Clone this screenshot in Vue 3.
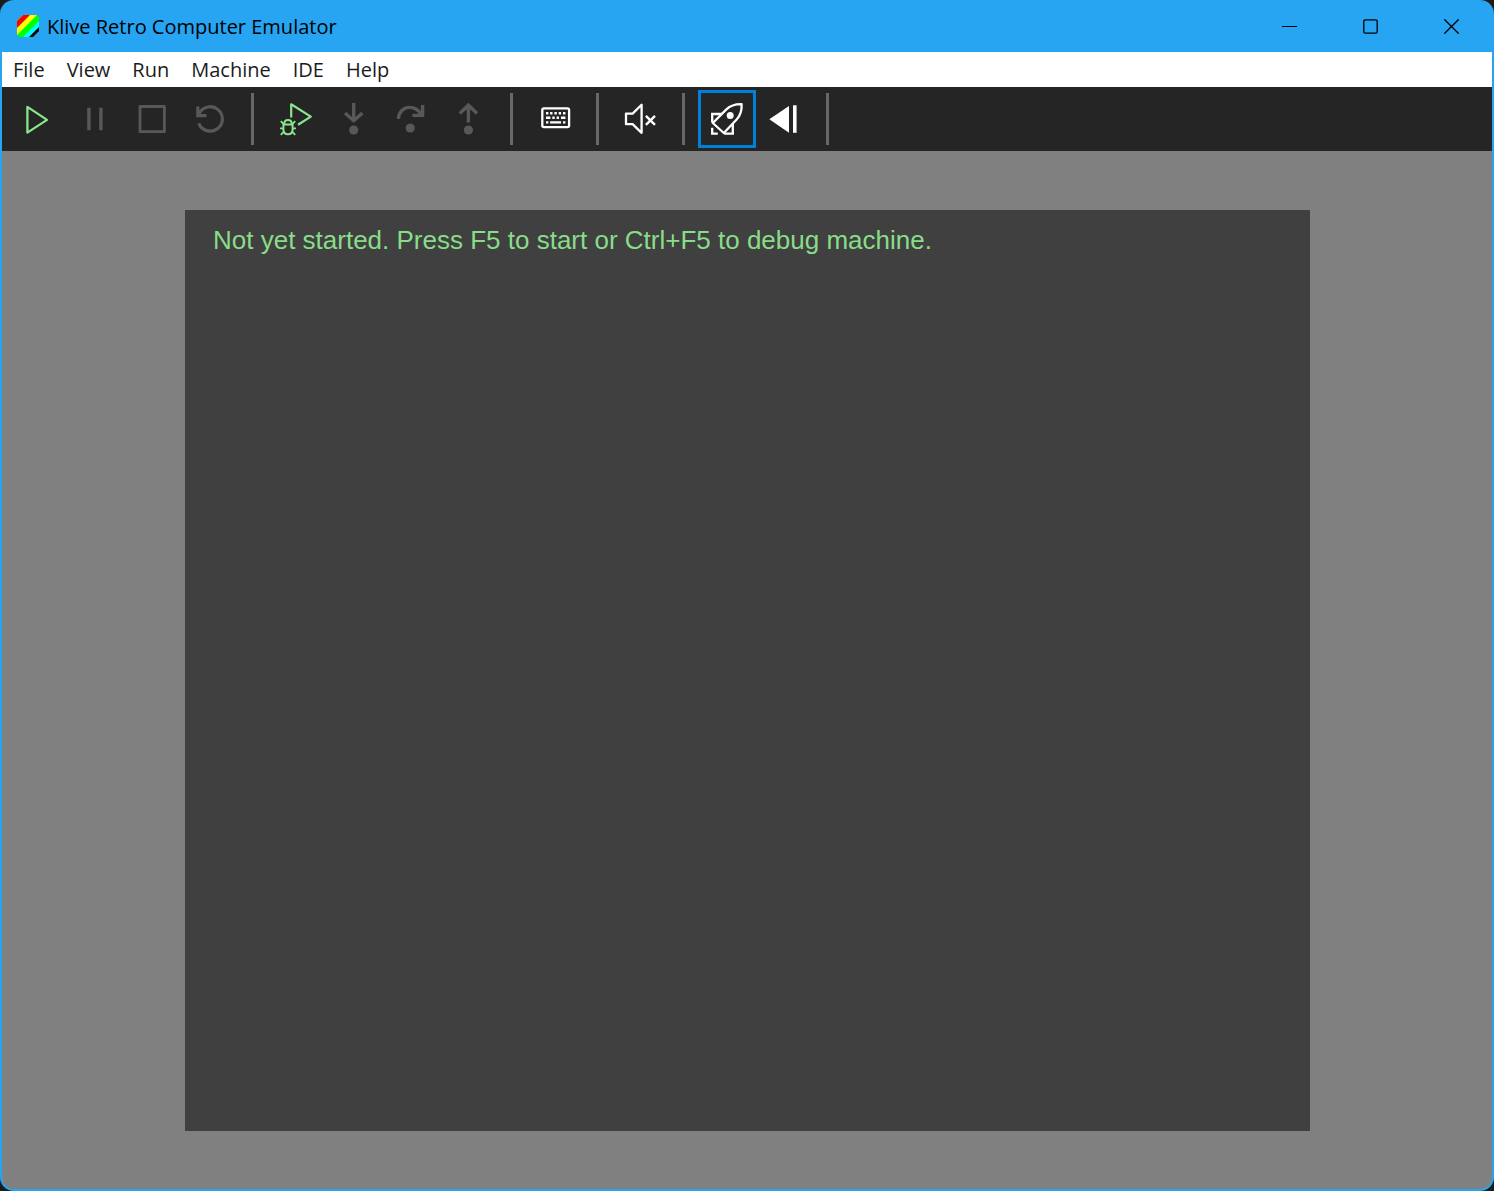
<script setup>
const menus = ['File', 'View', 'Run', 'Machine', 'IDE', 'Help']
</script>

<template>
  <div class="window">
    <header class="titlebar">
      <svg class="logo" viewBox="0 0 22 22" aria-hidden="true">
        <defs>
          <clipPath id="logo-shape">
            <path d="M6 0H20L22 2V16L16 22H2L0 20V6Z" />
          </clipPath>
        </defs>
        <g clip-path="url(#logo-shape)">
          <rect width="22" height="22" fill="#000" />
          <path d="M0 0H34L0 34Z" fill="#00ffff" />
          <path d="M0 0H28L0 28Z" fill="#00ff00" />
          <path d="M0 0H20L0 20Z" fill="#ffff00" />
          <path d="M0 0H13L0 13Z" fill="#ff0000" />
        </g>
      </svg>
      <h1 class="title">Klive Retro Computer Emulator</h1>
      <div class="captions">
        <button class="caption" type="button" aria-label="Minimize">
          <svg viewBox="0 0 15 15"><path d="M0 7.5H15" stroke-width="1" /></svg>
        </button>
        <button class="caption" type="button" aria-label="Maximize">
          <svg viewBox="0 0 15 15"><rect x="0.8" y="0.8" width="13.4" height="13.4" rx="1.5" /></svg>
        </button>
        <button class="caption" type="button" aria-label="Close">
          <svg viewBox="0 0 15 15"><path d="M0.3 0.3L14.7 14.7M14.7 0.3L0.3 14.7" /></svg>
        </button>
      </div>
    </header>

    <nav class="menubar">
      <button v-for="menu in menus" :key="menu" class="menu" type="button">{{ menu }}</button>
    </nav>

    <div class="toolbar" role="toolbar" aria-label="Machine controls">
      <div class="group group-four">
        <button class="tool go" type="button" aria-label="Start">
          <svg viewBox="0 0 58 58"><path d="M19.4 16.9V42.6L39 29.9Z" stroke-width="2.3" /></svg>
        </button>
        <button class="tool" type="button" aria-label="Pause" disabled>
          <svg viewBox="0 0 58 58"><path d="M22.9 17.7V40.3M34.9 17.7V40.3" stroke-width="3.4" /></svg>
        </button>
        <button class="tool" type="button" aria-label="Stop" disabled>
          <svg viewBox="0 0 58 58"><rect x="17" y="16.5" width="24.4" height="25.2" stroke-width="2.8" /></svg>
        </button>
        <button class="tool" type="button" aria-label="Restart" disabled>
          <svg viewBox="0 0 58 58">
            <path d="M18.2 23.6A12.2 12.2 0 1 1 17.8 33.4M16.8 16.6V25.6H25.4" stroke-width="3.2" stroke-linejoin="miter" />
          </svg>
        </button>
      </div>
      <span class="divider"></span>
      <div class="group group-four">
        <button class="tool go" type="button" aria-label="Debug">
          <svg viewBox="0 0 58 58" stroke-width="2.2">
            <path d="M24.2 27.5V14.3L43.8 26.6L31 34.8" />
            <path d="M16.4 34.4H25.6V39.4Q25.6 44.2 21 44.2Q16.4 44.2 16.4 39.4ZM17.2 34.2Q17.2 30 21 30Q24.8 30 24.8 34.2" stroke-width="2" />
            <path d="M13 38.4H16.6M25.4 38.4H29M13.8 31.2L17.2 34.6M28.2 31.2L24.8 34.6M13.8 44.8L17.4 41.2M28.2 44.8L24.6 41.2" stroke-width="1.9" />
          </svg>
        </button>
        <button class="tool" type="button" aria-label="Step into" disabled>
          <svg viewBox="0 0 58 58">
            <path d="M28.7 13V30M20 23L28.7 30.8L37.4 23" stroke-width="3.4" stroke-linejoin="miter" />
            <circle class="solid" cx="28.7" cy="40" r="4.6" />
          </svg>
        </button>
        <button class="tool" type="button" aria-label="Step over" disabled>
          <svg viewBox="0 0 58 58">
            <path d="M16.4 28.8C17 21.4 22 17.4 27.6 17.4C33 17.4 37 20.6 39.5 24.8M40.6 15V25.4H30.4" stroke-width="3.4" stroke-linejoin="miter" />
            <circle class="solid" cx="28.2" cy="38" r="4.6" />
          </svg>
        </button>
        <button class="tool" type="button" aria-label="Step out" disabled>
          <svg viewBox="0 0 58 58">
            <path d="M28.4 32.6V15M19.7 23.4L28.4 15.2L37.1 23.4" stroke-width="3.4" stroke-linejoin="miter" />
            <circle class="solid" cx="28.4" cy="40" r="4.6" />
          </svg>
        </button>
      </div>
      <span class="divider"></span>
      <div class="group">
        <button class="tool light" type="button" aria-label="Keyboard">
          <svg viewBox="0 0 58 58">
            <rect x="16.3" y="18.4" width="26.8" height="18.8" rx="1.6" stroke-width="2.3" />
            <path d="M20 23.2H22.4M24.1 23.2H26.5M28.4 23.2H30.8M32.7 23.2H35.1M37 23.2H39.4M20 27.8H24.4M26.3 27.8H28.7M30.6 27.8H33M35 27.8H39.4M20 32.4H22.4M24.1 32.4H35.1M37 32.4H39.4" stroke-width="2.4" />
          </svg>
        </button>
      </div>
      <span class="divider"></span>
      <div class="group">
        <button class="tool light" type="button" aria-label="Unmute">
          <svg viewBox="0 0 58 58">
            <path d="M14 23.6H20.6L29.6 14.8V42.8L20.6 34.2H14Z" stroke-width="2.3" />
            <path d="M33.9 25.8L43 34.8M43 25.8L33.9 34.8" stroke-width="2.4" />
          </svg>
        </button>
      </div>
      <span class="divider"></span>
      <div class="group">
        <button class="tool light selected" type="button" aria-label="Fast load" aria-pressed="true">
          <svg viewBox="0 0 58 58" stroke-width="2.3">
            <path d="M43.6 14.2C37 14 32 16 28.4 19.4L14.8 33L25.8 43L38.4 29.8C42 26 44 21 43.6 14.2Z" />
            <path d="M24 24H14.2V32.4M34.8 33.6V43.6H26.2M14.2 37.8V43.6H19.8" stroke-linejoin="miter" />
            <circle class="solid" cx="32.2" cy="25.5" r="3.5" />
          </svg>
        </button>
        <button class="tool light" type="button" aria-label="Rewind">
          <svg viewBox="0 0 58 58">
            <path class="solid" d="M13.3 29.3L33 15.9V42.7Z" />
            <path d="M38.8 15.3V42.8" stroke-width="3.6" />
          </svg>
        </button>
      </div>
      <span class="divider"></span>
    </div>

    <main class="stage">
      <section class="screen">
        <p class="message">Not yet started. Press F5 to start or Ctrl+F5 to debug machine.</p>
      </section>
    </main>
  </div>
</template>

<style>
body {
  margin: 0;
  background: #1c1c1c;
}
</style>

<style scoped>
.window {
  box-sizing: border-box;
  display: flex;
  flex-direction: column;
  min-height: 100vh;
  padding: 0 2px 2px;
  overflow: hidden;
  border-radius: 14px;
  background: #27a4f2;
  font-family: "Open Sans", "Noto Sans", sans-serif;
}

button {
  margin: 0;
  padding: 0;
  border: 0;
  background: none;
  color: inherit;
  font: inherit;
}

.titlebar {
  display: flex;
  align-items: center;
  height: 52px;
  padding-left: 15px;
}

.logo {
  width: 22px;
  height: 22px;
  margin-right: 8px;
}

.title {
  margin: 0;
  padding-top: 2px;
  color: #000;
  font-size: 20px;
  font-weight: 400;
  line-height: 28px;
}

.captions {
  display: flex;
  align-self: stretch;
  margin-left: auto;
}

.caption {
  display: flex;
  align-items: center;
  justify-content: center;
  width: 81px;
}

.caption svg {
  width: 15px;
  height: 15px;
  fill: none;
  stroke: #000;
  stroke-width: 1.3;
}

.menubar {
  display: flex;
  height: 35px;
  background: #fff;
  color: #1b1b1b;
  font-size: 20px;
  line-height: 35px;
}

.menu {
  padding: 0 11px;
}

.toolbar {
  display: flex;
  align-items: center;
  height: 64px;
  padding-left: 6px;
  background: #252525;
}

.group {
  display: flex;
}

.group-four {
  width: 231px;
}

.tool {
  box-sizing: border-box;
  display: flex;
  flex: 1 1 58px;
  align-items: center;
  justify-content: center;
  min-width: 0;
  height: 58px;
  color: #585858;
}

.tool svg {
  flex: none;
  width: 58px;
  height: 58px;
  fill: none;
  stroke: currentColor;
  stroke-linejoin: round;
}

.tool .solid {
  fill: currentColor;
  stroke: none;
}

.go {
  color: #8ae68a;
}

.light {
  color: #fff;
}

.selected {
  outline: 3px solid #0080d8;
  outline-offset: -3px;
}

.divider {
  width: 3px;
  height: 52px;
  margin: 0 13px 0 12px;
  background: #686868;
}

.stage {
  display: flex;
  flex: 1;
  padding: 59px 182px 58px 183px;
  border-radius: 0 0 12px 12px;
  background: #808080;
}

.screen {
  flex: 1;
  background: #404040;
}

.message {
  margin: 0;
  padding: 14px 28px;
  color: #88dd88;
  font-family: "Liberation Sans", Arial, sans-serif;
  font-size: 26px;
  line-height: 32px;
}
</style>
